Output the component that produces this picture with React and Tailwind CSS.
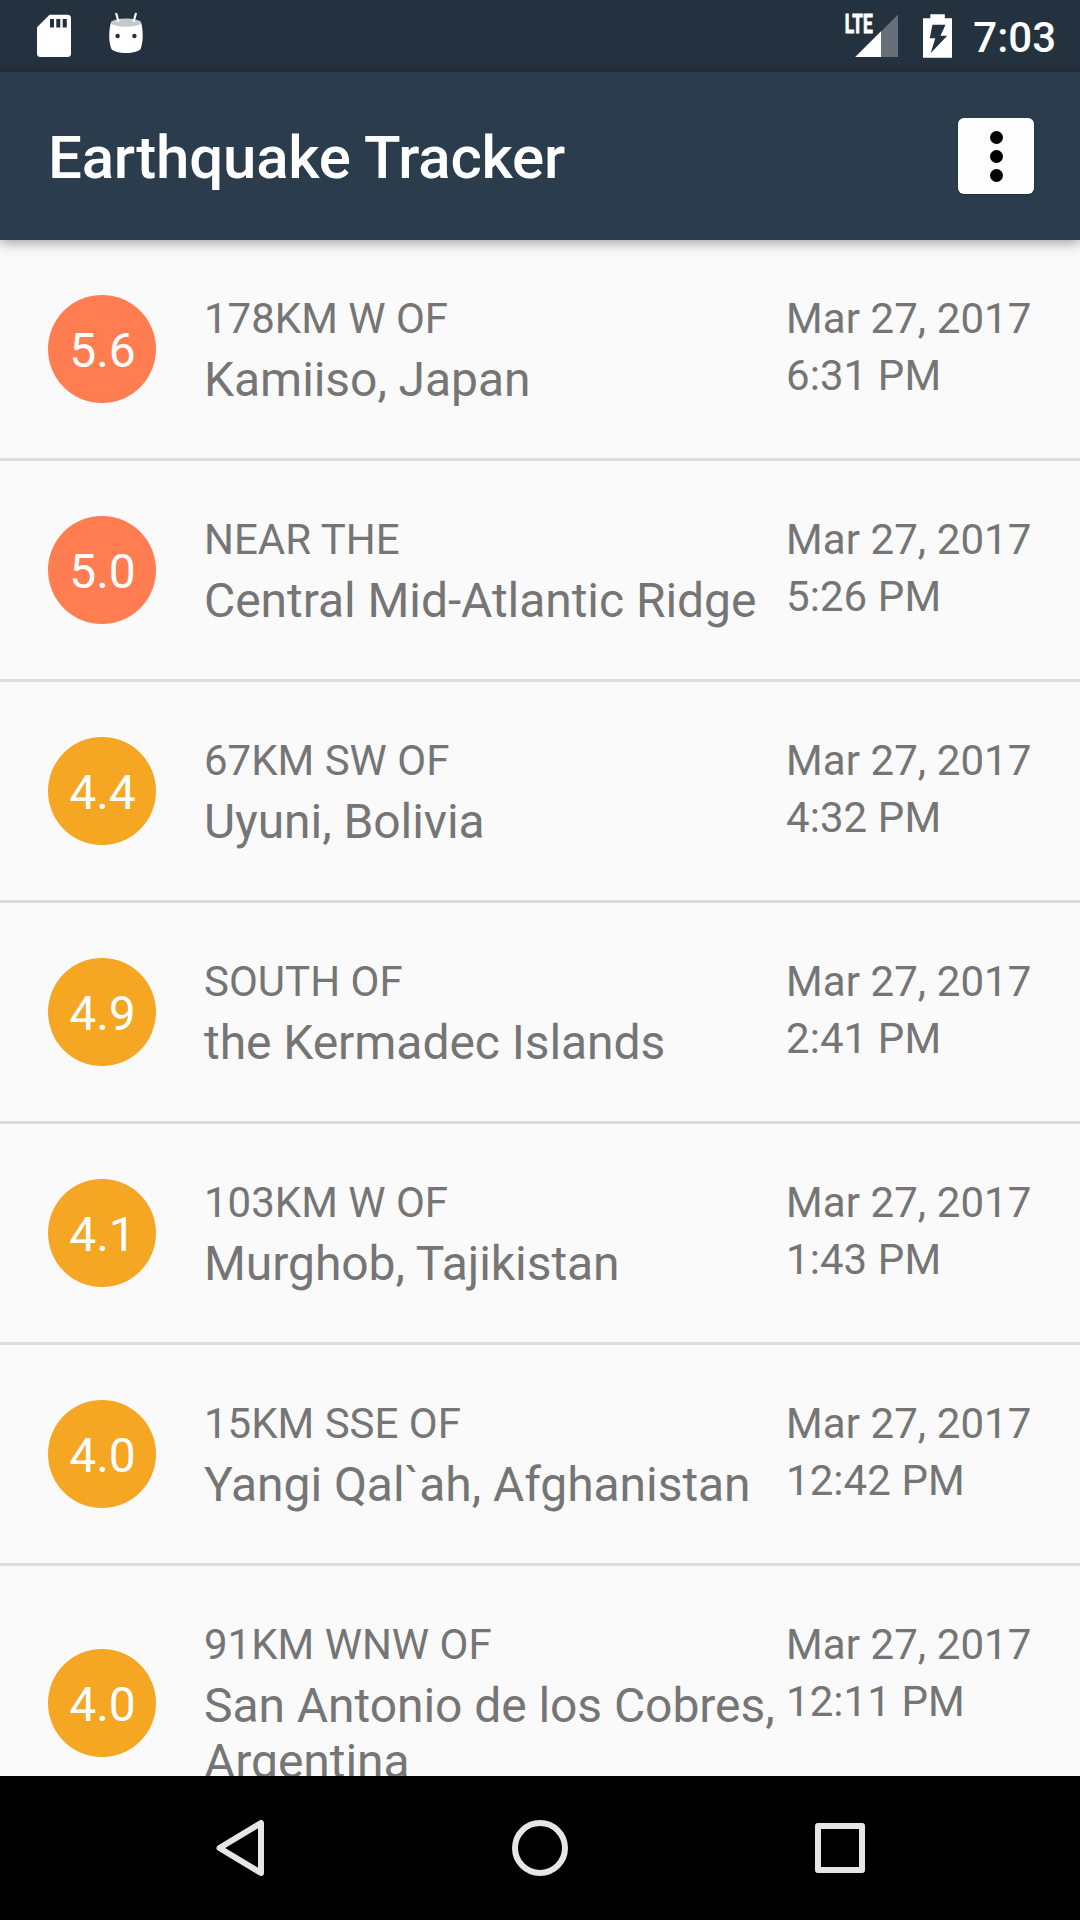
const quakes = [
  { mag: "5.6", offset: "178KM W OF", place: "Kamiiso, Japan", time: "6:31 PM" },
  { mag: "5.0", offset: "NEAR THE", place: "Central Mid-Atlantic Ridge", time: "5:26 PM" },
  { mag: "4.4", offset: "67KM SW OF", place: "Uyuni, Bolivia", time: "4:32 PM" },
  { mag: "4.9", offset: "SOUTH OF", place: "the Kermadec Islands", time: "2:41 PM" },
  { mag: "4.1", offset: "103KM W OF", place: "Murghob, Tajikistan", time: "1:43 PM" },
  { mag: "4.0", offset: "15KM SSE OF", place: "Yangi Qal`ah, Afghanistan", time: "12:42 PM" },
  { mag: "4.0", offset: "91KM WNW OF", place: "San Antonio de los Cobres, Argentina", time: "12:11 PM" },
];

function StatusBar() {
  return (
    <div className="flex h-[72px] shrink-0 items-start justify-between bg-[#24313e] pr-[24px] pl-[36px] text-white">
      <div className="flex gap-[36px]">
        <svg className="h-[72px] w-[36px]" viewBox="36 0 36 72" fill="currentColor">
          <path
            fillRule="evenodd"
            d="M49.5 14.8H67.5Q71 14.8 71 18.3V53.5Q71 57 67.5 57H40.5Q37 57 37 53.5V27.3ZM50 19V27.5H54V19ZM56.3 19V27.5H60.3V19ZM62.7 19V27.5H66.8V19Z"
          />
        </svg>
        <svg className="h-[72px] w-[36px]" viewBox="108 0 36 72">
          <path d="M110.8 23C109 29 108.4 41 111.2 48.5C112 51 119 53 126 53S140 51 140.8 48.5C143.6 41 143 29 141.2 23Z" fill="#fff" />
          <ellipse cx="126" cy="22.7" rx="15.2" ry="4.1" fill="#c5c9cc" />
          <path d="M116.3 13.8L118.3 21M135.8 13.8L133.8 21" stroke="#fff" strokeWidth="2.2" strokeLinecap="round" />
          <circle cx="117.6" cy="36" r="2.2" fill="#24313e" />
          <circle cx="134.4" cy="36" r="2.2" fill="#24313e" />
        </svg>
      </div>
      <div className="flex">
        <svg className="h-[72px] w-[60px]" viewBox="841 0 60 72" fill="#fff">
          <path d="M898 14.5V57H881V31.5Z" fillOpacity=".3" />
          <path d="M855.2 57L881 31.3V57Z" />
          <text
            x="844.8"
            y="33.3"
            className="font-['Roboto'] text-[26px] font-bold"
            stroke="#fff"
            strokeWidth="0.9"
            textLength="28"
            lengthAdjust="spacingAndGlyphs"
          >
            LTE
          </text>
        </svg>
        <svg className="h-[72px] w-[72px]" viewBox="901 0 72 72" fill="#fff">
          <path
            fillRule="evenodd"
            d="M930.3 14.3H944.8V18.2H952V57.8H923V18.2H930.3ZM932.4 24.7L929.8 38.3H935.3L930.6 53.3L947.2 35.8H940.5L945.5 24.7Z"
          />
        </svg>
        <span className="pt-[13px] text-[42px] leading-[50px] font-medium">7:03</span>
      </div>
    </div>
  );
}

function AppBar() {
  return (
    <header className="relative z-10 flex h-[168px] shrink-0 items-center justify-between bg-[#2b3d4d] pr-[46px] pl-[48px] shadow-[0_3px_12px_rgba(0,0,0,0.36)]">
      <h1 className="pt-[4px] text-[60px] leading-[70px] font-medium tracking-[-0.2px] text-white">Earthquake Tracker</h1>
      <button className="flex size-[76px] flex-col items-center justify-center gap-[6px] rounded-[6px] bg-[#fdfdfd] shadow-[0_1px_2px_rgba(0,0,0,0.35)]">
        <span className="size-[13px] rounded-full bg-black" />
        <span className="size-[13px] rounded-full bg-black" />
        <span className="size-[13px] rounded-full bg-black" />
      </button>
    </header>
  );
}

function QuakeRow({ mag, offset, place, time }) {
  const color = mag.startsWith("5") ? "bg-[#ff7d50]" : "bg-[#f5a623]";
  return (
    <li className="flex shrink-0 items-center border-b-[3px] border-[#dcdcdc] px-[48px] py-[48px] text-[#757575]">
      <div className={`flex size-[108px] shrink-0 items-center justify-center rounded-full pt-[4px] pl-[1px] text-[48px] leading-[56px] text-white ${color}`}>
        {mag}
      </div>
      <div className="ml-[48px] w-[582px] shrink-0">
        <p className="pt-[6px] text-[42px] leading-[50px]">{offset}</p>
        <p className="pt-[8px] pb-[2px] text-[48px] leading-[56px] tracking-[-0.06px]">{place}</p>
      </div>
      <div className="self-start pt-[2px] text-[42px] leading-[57px] tracking-[0.08px] whitespace-nowrap">
        <p>Mar 27, 2017</p>
        <p>{time}</p>
      </div>
    </li>
  );
}

function NavBar() {
  return (
    <nav className="flex h-[144px] shrink-0 items-center justify-between bg-black px-[210px] text-[#e6e6e6]">
      <svg className="size-[60px]" viewBox="0 0 60 60" fill="none" stroke="currentColor" strokeWidth="6" strokeLinejoin="round">
        <path d="M51 5V55L9.5 30Z" />
      </svg>
      <svg className="size-[60px]" viewBox="0 0 60 60" fill="none" stroke="currentColor" strokeWidth="6">
        <circle cx="30" cy="30" r="25" />
      </svg>
      <svg className="size-[60px]" viewBox="0 0 60 60" fill="none" stroke="currentColor" strokeWidth="6" strokeLinejoin="round">
        <path d="M8 8H52V52H8Z" />
      </svg>
    </nav>
  );
}

export default function App() {
  return (
    <div className="flex h-[1920px] w-[1080px] flex-col overflow-hidden bg-[#fafafa] font-['Roboto',sans-serif]">
      <StatusBar />
      <AppBar />
      <ul className="flex min-h-0 flex-1 flex-col overflow-hidden">
        {quakes.map((q) => (
          <QuakeRow key={q.offset} {...q} />
        ))}
      </ul>
      <NavBar />
    </div>
  );
}
